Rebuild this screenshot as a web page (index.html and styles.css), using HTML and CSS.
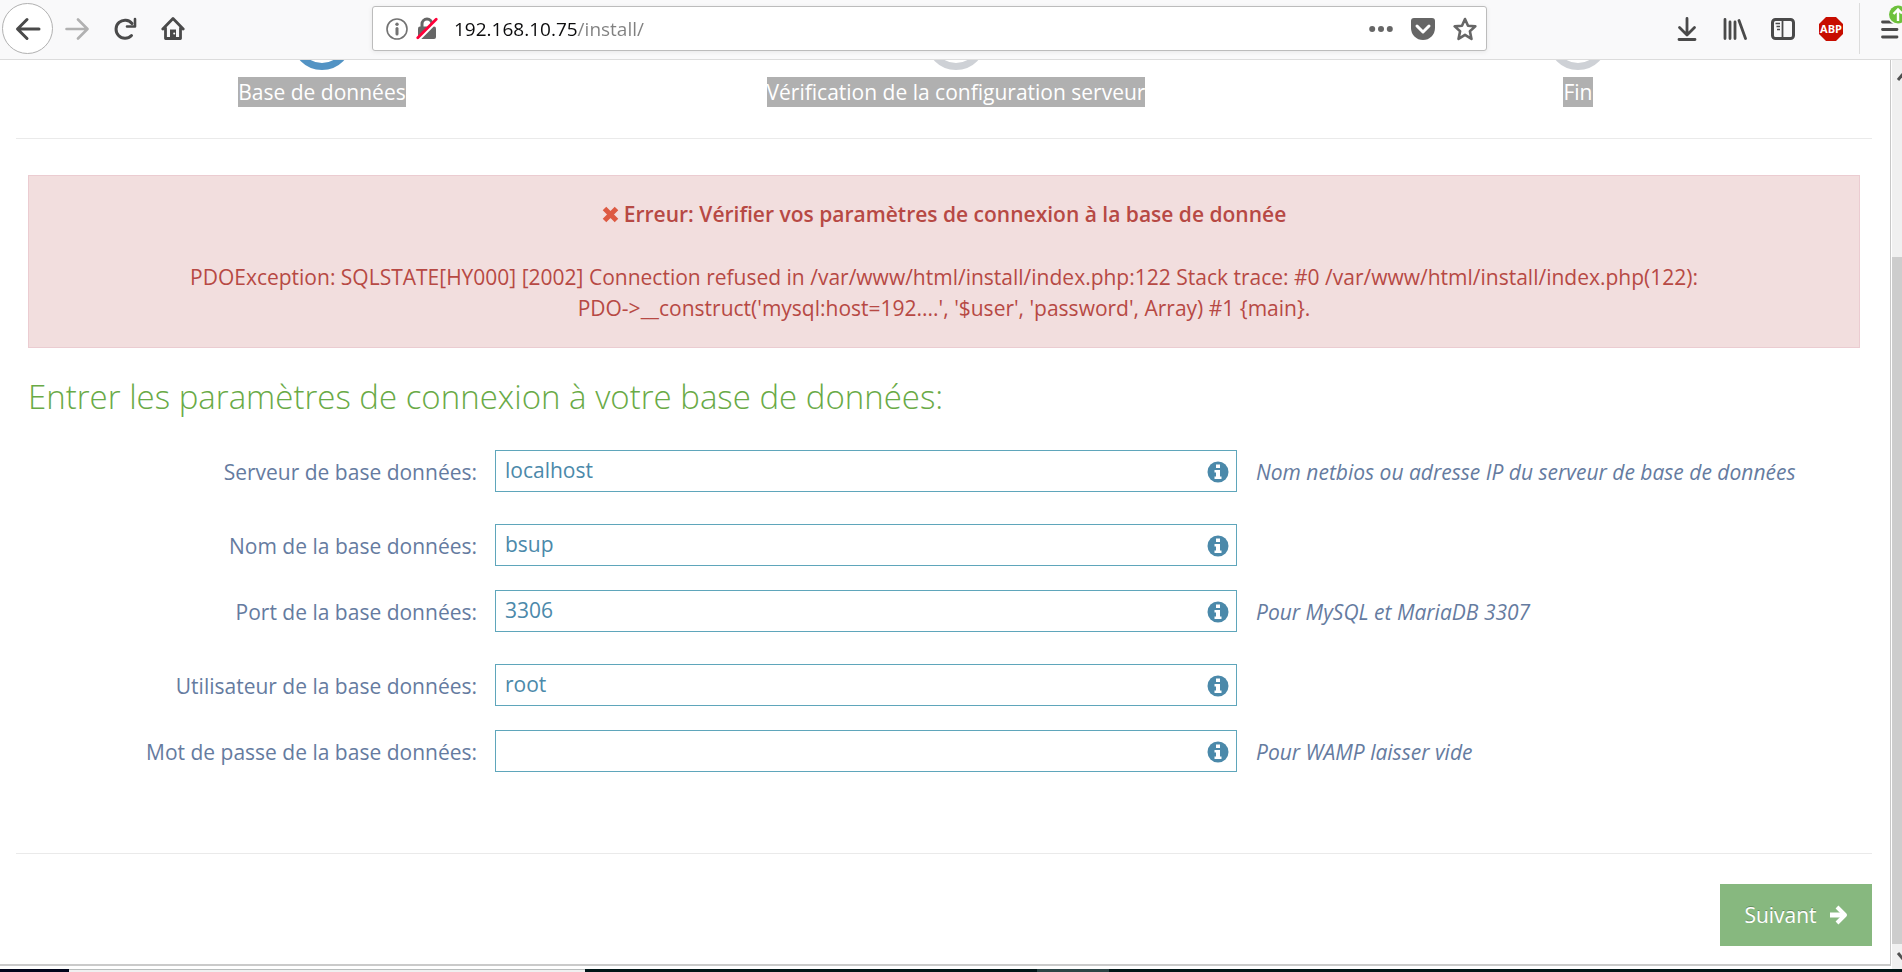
FILE: index.html
```html
<!DOCTYPE html>
<html lang="fr">
<head>
    <meta charset="UTF-8">
    <meta name="viewport" content="width=device-width, initial-scale=1.0">
    <title>Installation</title>
    <link rel="stylesheet" href="styles.css">
</head>
<body>
    <!-- Browser toolbar -->
    <header class="toolbar">
        <nav class="nav-buttons">
            <button class="tool-button back-button" aria-label="Page précédente">
                <svg width="26" height="24" viewBox="0 0 26 24" fill="none" stroke="#4a4a4a" stroke-width="3" stroke-linecap="round" stroke-linejoin="round"><path d="M24 12H3M12 2.500L2.500 12L12 21.500"/></svg>
            </button>
            <button class="tool-button" aria-label="Page suivante">
                <svg width="24" height="24" viewBox="0 0 24 24" fill="none" stroke="#b1b1b1" stroke-width="2.600" stroke-linecap="round" stroke-linejoin="round"><path d="M1.500 12H22M13 2.500L22.500 12L13 21.500"/></svg>
            </button>
            <button class="tool-button" aria-label="Actualiser">
                <svg width="24" height="24" viewBox="0 0 24 24" fill="none" stroke="#4a4a4a" stroke-width="3"><path d="M18.500 18.500A9 9 0 1 1 19 6.500" stroke-linecap="round"/><path d="M22 2V9.500H14" stroke-linejoin="round" stroke-linecap="round" stroke-width="2.600"/></svg>
            </button>
            <button class="tool-button" aria-label="Accueil">
                <svg width="24" height="25" viewBox="0 0 24 25" fill="none" stroke="#4a4a4a" stroke-width="2.800" stroke-linecap="round" stroke-linejoin="round"><path d="M1.800 13L12 2.500L22.200 13M4.500 12V22.500H19.500V12"/><path d="M9 22V13.500H15V22Z" fill="#4a4a4a" stroke="none"/><circle cx="13.200" cy="17.500" r="1" fill="#fff" stroke="none"/></svg>
            </button>
        </nav>
        <div class="url-bar">
            <svg width="22" height="22" viewBox="0 0 22 22"><circle cx="11" cy="11" r="10" fill="none" stroke="#737373" stroke-width="1.600"/><circle cx="11" cy="6.300" r="1.700" fill="#737373"/><path d="M11 10.500V16" stroke="#737373" stroke-width="3" stroke-linecap="round"/></svg>
            <svg width="22" height="23" viewBox="0 0 22 23"><path d="M6 11V7a5 5 0 0 1 10 0v4" fill="none" stroke="#666" stroke-width="3"/><rect x="2" y="9.500" width="18" height="12.500" rx="2" fill="#666"/><path d="M2.500 22L21.500 3" stroke="#fff" stroke-width="4"/><path d="M1.800 20.700L20.200 2.300" stroke="#ff0039" stroke-width="2.800" stroke-linecap="round"/></svg>
            <input class="url-input" type="text" aria-label="Adresse" value="192.168.10.75/install/">
            <button class="tool-button" aria-label="Actions">
                <svg width="24" height="8" viewBox="0 0 24 8" fill="#666"><circle cx="3.200" cy="4" r="3"/><circle cx="12" cy="4" r="3"/><circle cx="20.800" cy="4" r="3"/></svg>
            </button>
            <button class="tool-button" aria-label="Pocket">
                <svg width="24" height="22" viewBox="0 0 24 22"><path d="M3 0H21a3 3 0 0 1 3 3V10a12 12 0 0 1-24 0V3a3 3 0 0 1 3-3Z" fill="#666"/><path d="M6 8L12 14L18 8" fill="none" stroke="#fff" stroke-width="3" stroke-linecap="round" stroke-linejoin="round"/></svg>
            </button>
            <button class="tool-button" aria-label="Marque-page">
                <svg width="24" height="24" viewBox="0 0 24 24"><path d="M12 2L15 8.700L22.300 9.400L16.900 14.200L18.500 21.900L12 17.900L5.500 21.900L7.100 14.200L1.700 9.400L9 8.700Z" fill="none" stroke="#666" stroke-width="2.600" stroke-linejoin="round"/></svg>
            </button>
        </div>
        <div class="extensions">
            <button class="tool-button" aria-label="Téléchargements">
                <svg width="24" height="24" viewBox="-2 0 24 24" fill="none" stroke="#4a4a4a" stroke-width="2.800" stroke-linecap="round" stroke-linejoin="round"><path d="M10 1.500V17M2.500 10.500L10 18L17.500 10.500M2 22.500H18"/></svg>
            </button>
            <button class="tool-button" aria-label="Bibliothèque">
                <svg width="24" height="22" viewBox="0 0 24 22" fill="none" stroke="#4a4a4a" stroke-width="2.800" stroke-linecap="round"><path d="M2 1.500V20.500M7 4V20.500M12 4V20.500M16 2.500L22.500 20.500"/></svg>
            </button>
            <button class="tool-button" aria-label="Panneaux latéraux">
                <svg width="24" height="22" viewBox="0 0 24 22" fill="none" stroke="#4a4a4a"><rect x="1.500" y="1.500" width="21" height="19" rx="3" stroke-width="3"/><path d="M11.500 2V20" stroke-width="1.800"/><path d="M4.500 5.500H9M5.500 8.500H9M6 11.500H9" stroke-width="1.500"/></svg>
            </button>
            <button class="tool-button" aria-label="Adblock Plus">
                <svg width="24" height="24" viewBox="0 0 24 24"><path d="M7 0H17L24 7V17L17 24H7L0 17V7Z" fill="#c70d00"/><text class="abp-text" x="12" y="16" text-anchor="middle">ABP</text></svg>
            </button>
        </div>
        <div class="menu-area">
            <button class="tool-button menu-button" aria-label="Ouvrir le menu">
                <svg width="22" height="36" viewBox="0 0 22 36"><path d="M2.500 19H17M2.500 26.500H17M2.500 34H17" stroke="#4a4a4a" stroke-width="2.800" stroke-linecap="round"/><circle cx="18" cy="11.500" r="10.500" fill="#f9f9fa"/><circle cx="18" cy="11.500" r="9" fill="#6dc13c"/><path d="M18 18V7M13.500 11L18 6.500L22 10.500" fill="none" stroke="#fff" stroke-width="2.400"/></svg>
            </button>
        </div>
    </header>

    <div class="viewport">
        <main class="page">
            <ol class="steps">
                <li class="step active"><span class="step-circle"></span><span class="step-title">Base de données</span></li>
                <li class="step"><span class="step-circle"></span><span class="step-title">Vérification de la configuration serveur</span></li>
                <li class="step"><span class="step-circle"></span><span class="step-title">Fin</span></li>
            </ol>

            <hr>

            <div class="content">
                <div class="alert">
                    <strong>
                        <svg width="17" height="17" viewBox="0 0 17 17" stroke="#dd5a43" stroke-width="5"><path d="M2.500 2.500L14.500 14.500M14.500 2.500L2.500 14.500"/></svg>
                        Erreur: Vérifier vos paramètres de connexion à la base de donnée
                    </strong>
                    <p>PDOException: SQLSTATE[HY000] [2002] Connection refused in /var/www/html/install/index.php:122 Stack trace: #0 /var/www/html/install/index.php(122): <span class="call">PDO-&gt;__construct('mysql:host=192....',</span> '$user', 'password', Array) #1 {main}.</p>
                </div>

                <h3>Entrer les paramètres de connexion à votre base de données:</h3>

                <form id="dbForm">
                    <div class="form-group with-help">
                        <label for="server">Serveur de base données:</label>
                        <div class="input-icon">
                            <input type="text" id="server" value="localhost">
                            <svg class="info" width="22" height="22" viewBox="0 0 22 22"><circle cx="11" cy="11" r="10.500" fill="#4b89aa"/><path d="M9 3.500H13V7H9ZM7.500 9H13V15.500H14.500V18H7.500V15.500H9V11.500H7.500Z" fill="#fff"/></svg>
                        </div>
                        <span class="help">Nom netbios ou adresse IP du serveur de base de données</span>
                    </div>
                    <div class="form-group">
                        <label for="dbname">Nom de la base données:</label>
                        <div class="input-icon">
                            <input type="text" id="dbname" value="bsup">
                            <svg class="info" width="22" height="22" viewBox="0 0 22 22"><circle cx="11" cy="11" r="10.500" fill="#4b89aa"/><path d="M9 3.500H13V7H9ZM7.500 9H13V15.500H14.500V18H7.500V15.500H9V11.500H7.500Z" fill="#fff"/></svg>
                        </div>
                    </div>
                    <div class="form-group with-help">
                        <label for="port">Port de la base données:</label>
                        <div class="input-icon">
                            <input type="text" id="port" value="3306">
                            <svg class="info" width="22" height="22" viewBox="0 0 22 22"><circle cx="11" cy="11" r="10.500" fill="#4b89aa"/><path d="M9 3.500H13V7H9ZM7.500 9H13V15.500H14.500V18H7.500V15.500H9V11.500H7.500Z" fill="#fff"/></svg>
                        </div>
                        <span class="help">Pour MySQL et MariaDB 3307</span>
                    </div>
                    <div class="form-group">
                        <label for="user">Utilisateur de la base données:</label>
                        <div class="input-icon">
                            <input type="text" id="user" value="root">
                            <svg class="info" width="22" height="22" viewBox="0 0 22 22"><circle cx="11" cy="11" r="10.500" fill="#4b89aa"/><path d="M9 3.500H13V7H9ZM7.500 9H13V15.500H14.500V18H7.500V15.500H9V11.500H7.500Z" fill="#fff"/></svg>
                        </div>
                    </div>
                    <div class="form-group with-help">
                        <label for="password">Mot de passe de la base données:</label>
                        <div class="input-icon">
                            <input type="password" id="password" value="">
                            <svg class="info" width="22" height="22" viewBox="0 0 22 22"><circle cx="11" cy="11" r="10.500" fill="#4b89aa"/><path d="M9 3.500H13V7H9ZM7.500 9H13V15.500H14.500V18H7.500V15.500H9V11.500H7.500Z" fill="#fff"/></svg>
                        </div>
                        <span class="help">Pour WAMP laisser vide</span>
                    </div>
                </form>
            </div>

            <hr>

            <div class="actions">
                <button type="submit" form="dbForm" class="next-button">
                    Suivant
                    <svg width="19" height="20" viewBox="0 0 19 20" fill="none" stroke="#fff" stroke-width="4" stroke-linejoin="round"><path d="M1 10H15" stroke-width="5"/><path d="M8 2L16 10L8 18"/></svg>
                </button>
            </div>
        </main>
        <div class="scrollbar">
            <svg width="10" height="24" viewBox="0 0 10 24"><path d="M6 20L11 14" stroke="#505050" stroke-width="3"/></svg>
            <div class="scroll-thumb"></div>
            <svg width="10" height="25" viewBox="0 0 10 25"><path d="M6 9L11 15" stroke="#505050" stroke-width="3"/></svg>
        </div>
    </div>

    <footer class="taskbar">
        <span class="task-start"></span>
        <span class="task-search"></span>
        <span class="task-apps"></span>
        <span class="task-active"></span>
        <span class="task-rest"></span>
    </footer>
</body>
</html>
```
FILE: styles.css
```css
* {
    box-sizing: border-box;
}

body {
    margin: 0;
    height: 100vh;
    display: flex;
    flex-direction: column;
    overflow: hidden;
    background-color: #fff;
    font-family: "Open Sans", "Noto Sans", sans-serif;
    font-size: 21px;
    line-height: 31px;
    color: #393939;
}

svg {
    display: block;
    flex: none;
}

/* Browser toolbar */
.toolbar {
    display: flex;
    align-items: center;
    height: 60px;
    flex: none;
    background-color: #f9f9fa;
    border-bottom: 1px solid #dcdcdc;
    padding-bottom: 2px;
}

.tool-button {
    display: flex;
    align-items: center;
    justify-content: center;
    background: none;
    border: none;
    padding: 0;
    cursor: pointer;
}

.nav-buttons {
    display: flex;
    align-items: center;
    gap: 24px;
    width: 372px;
    padding-left: 2px;
}

.back-button {
    width: 51px;
    height: 51px;
    border: 1px solid #b1b1b1;
    border-radius: 50%;
    background-color: #fff;
    margin-right: -12px;
}

.url-bar {
    flex: 1;
    display: flex;
    align-items: center;
    gap: 18px;
    height: 45px;
    padding: 0 9px 0 13px;
    background-color: #fff;
    border: 1px solid #bcbcbc;
    border-radius: 3px;
    box-shadow: 0 1px 5px rgba(0,0,0,0.08);
}

.url-bar svg + svg {
    margin-left: -10px;
}

/* the host is black, the path is grey */
.url-input {
    flex: 1;
    min-width: 0;
    border: none;
    outline: none;
    padding: 0;
    margin-left: -2px;
    font-family: "Open Sans", "Noto Sans", sans-serif;
    font-size: 19px;
    color: transparent;
    background: linear-gradient(to right, #0c0c0d 124px, #808080 124px);
    -webkit-background-clip: text;
    background-clip: text;
}

.extensions {
    display: flex;
    align-items: center;
    justify-content: flex-end;
    gap: 24px;
    width: 372px;
    padding-right: 16px;
}

.abp-text {
    font-family: "Open Sans", sans-serif;
    font-size: 11px;
    font-weight: bold;
    fill: #fff;
}

.menu-area {
    height: 51px;
    width: 43px;
    border-left: 1px solid #dcdcdc;
    padding-left: 20px;
}

/* Page */
.viewport {
    flex: 1;
    min-height: 0;
    display: flex;
    overflow: hidden;
}

.page {
    flex: 1;
    margin-bottom: 3px;
    padding: 0 18px 0 16px;
    border-right: 1px solid #c8c8c8;
    border-bottom: 2px solid #cacaca;
}

hr {
    margin: 0;
    border: none;
    border-top: 1px solid #eaeaea;
}

.steps {
    display: grid;
    grid-template-columns: 153fr 164fr 147fr;
    list-style: none;
    margin: -50px 0 31px;
    padding: 0;
}

.step {
    display: flex;
    flex-direction: column;
    align-items: center;
}

.step-circle {
    width: 60px;
    height: 60px;
    border: 7px solid #ced1d6;
    border-radius: 50%;
    margin-bottom: 7px;
}

.active .step-circle {
    border-color: #5293c4;
}

.step-title {
    background-color: #b0b0b0;
    color: #fff;
    line-height: 30px;
}

.content {
    padding: 36px 12px 49px;
}

.alert {
    padding: 23px 12px;
    background-color: #f2dede;
    border: 1px solid #ebccd1;
    color: #b74944;
    text-align: center;
}

.alert strong {
    display: flex;
    align-items: center;
    justify-content: center;
    gap: 5px;
    font-weight: 600;
}

.alert p {
    margin: 32px 0 0;
}

.call {
    white-space: nowrap;
}

h3 {
    margin: 29px 0 33px;
    font-size: 33px;
    line-height: 40px;
    font-weight: 300;
    color: #69aa46;
}

.form-group {
    display: grid;
    grid-template-columns: 449px 742px 1fr;
    column-gap: 18px;
    align-items: start;
    margin-bottom: 22px;
    line-height: 44px;
}

.with-help {
    min-height: 52px;
}

.form-group label {
    text-align: right;
    color: #657ba0;
}

.input-icon {
    position: relative;
}

.input-icon input {
    display: block;
    width: 100%;
    height: 42px;
    padding: 0 36px 2px 9px;
    border: 1px solid #5fa6bb;
    background-color: #fff;
    color: #4b89aa;
    font-family: inherit;
    font-size: 21px;
}

.info {
    position: absolute;
    top: 11px;
    right: 8px;
}

.help {
    padding-left: 1px;
    color: #657ba0;
    font-size: 21px;
    font-style: italic;
}

.actions {
    display: flex;
    justify-content: flex-end;
    padding-top: 30px;
}

.next-button {
    display: flex;
    align-items: center;
    justify-content: center;
    gap: 12px;
    width: 152px;
    height: 62px;
    border: none;
    background-color: #87b87f;
    color: #fff;
    font-family: inherit;
    font-size: 21px;
    text-shadow: 0 -1px 0 rgba(0,0,0,0.25);
    cursor: pointer;
}

/* Scrollbar at the window edge */
.scrollbar {
    width: 11px;
    display: flex;
    flex-direction: column;
    border-left: 1px solid #fff;
    background-color: #f0f0f0;
}

.scroll-thumb {
    flex: 1;
    margin-top: 173px;
    background-color: #cdcdcd;
}

/* Top edge of the desktop taskbar */
.taskbar {
    display: flex;
    flex: none;
    height: 3px;
}

.task-start {
    width: 69px;
    background-color: #00041a;
}

.task-search {
    width: 516px;
    background-color: #f0f0f0;
    border-top: 1px solid #b8bcbc;
}

.task-apps {
    width: 452px;
    background-color: #001517;
}

.task-active {
    width: 72px;
    background-color: #2c4445;
}

.task-rest {
    flex: 1;
    background-color: #001517;
}
```
